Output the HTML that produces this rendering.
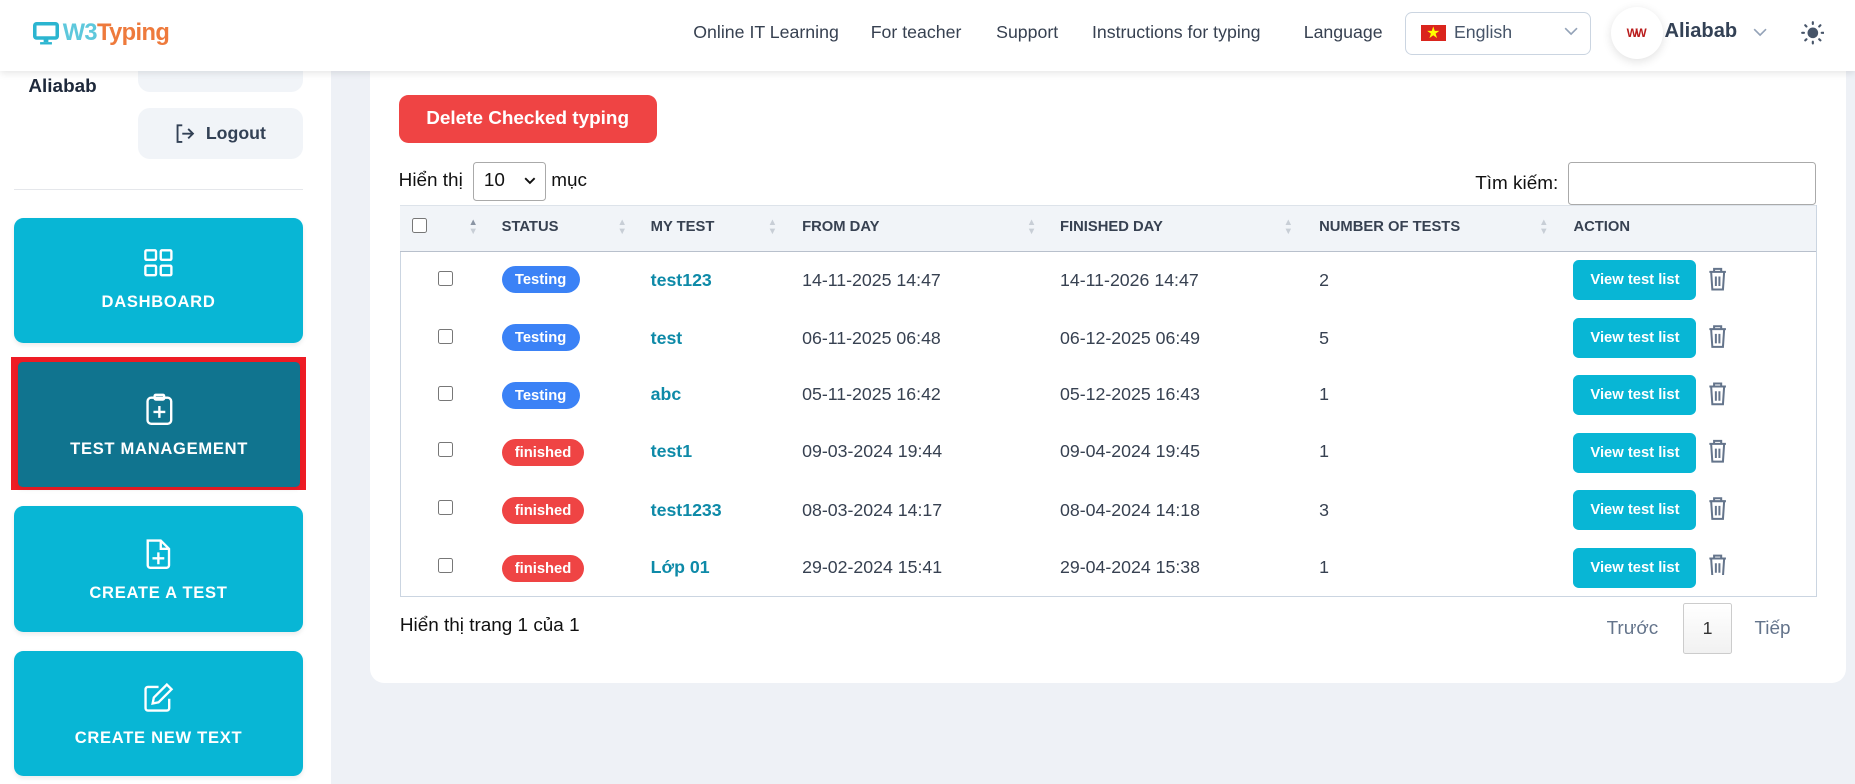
<!DOCTYPE html>
<html><head><meta charset="utf-8"><style>
html,body{margin:0;padding:0;}
body{width:1568px;height:663px;zoom:1.18304;overflow:hidden;background:#eef1f6;font-family:"Liberation Sans","Noto Sans CJK SC",sans-serif;position:relative;color:#334155}
.a{position:absolute}
.hdr{left:0;top:0;width:1568px;height:60px;background:#fff;box-shadow:0 2px 6px rgba(0,0,0,.1);z-index:5}
.nav{font-size:15px;color:#374151;top:19px}
.side{left:0;top:0;width:280px;height:663px;background:#fff}
.nb{left:12px;width:244px;height:106px;background:#08b6d5;border-radius:8px;color:#fff;font-weight:bold;font-size:14px;letter-spacing:.6px;text-align:center;box-shadow:0 2px 4px rgba(0,0,0,.08)}
.nb svg{display:block;margin:26px auto 11px}
.card{left:313px;top:40px;width:1247px;height:537px;background:#fff;border-radius:12px}
.th{top:185px;font-size:12.5px;font-weight:bold;color:#374151}
.cell{font-size:15px;color:#374151}
.cb{width:11px;height:11px;border:1px solid #777;border-radius:2px;background:#fff}
.badge{height:23px;line-height:24px;border-radius:12px;color:#fff;font-weight:bold;font-size:12.5px;text-align:center}
.lnk{color:#0e8aa8;font-weight:bold;font-size:15px}
.vb{width:104px;height:34px;line-height:34px;background:#08b6d5;border-radius:5px;color:#fff;font-weight:bold;font-size:12.5px;text-align:center}
.sort{font-size:8px;color:#c8ced6;line-height:8px}
</style></head><body>
<div class="a side"></div>
<div class="a card"></div>
<!-- header -->
<div class="a hdr">
 <svg class="a" style="left:28px;top:19px" width="22" height="20" viewBox="0 0 22 20"><rect x="1.5" y="1.5" width="19" height="12" rx="1.5" fill="none" stroke="#2bb5d0" stroke-width="3"/><rect x="9" y="14" width="4" height="3" fill="#2bb5d0"/><rect x="6" y="17" width="10" height="2" fill="#2bb5d0"/></svg>
 <div class="a" style="left:53px;top:17px;font-size:20px;font-weight:bold;letter-spacing:-0.5px"><span style="color:#5ec8dc">W3</span><span style="color:#ee7a3c">Typing</span></div>
 <div class="a nav" style="left:586px">Online IT Learning</div>
 <div class="a nav" style="left:736px">For teacher</div>
 <div class="a nav" style="left:842px">Support</div>
 <div class="a nav" style="left:923px">Instructions for typing</div>
 <div class="a nav" style="left:1102px">Language</div>
 <div class="a" style="left:1188px;top:10px;width:155px;height:35px;border:1px solid #cbd5e1;border-radius:6px"></div>
 <div class="a" style="left:1201px;top:21px;width:21px;height:14px;background:#da251d"></div>
 <div class="a" style="left:1206px;top:19px;color:#ff0;font-size:11px">★</div>
 <div class="a nav" style="left:1229px;color:#475569">English</div>
 <svg class="a" style="left:1322px;top:23px" width="12" height="8" viewBox="0 0 12 8"><path d="M1 1l5 5 5-5" fill="none" stroke="#94a3b8" stroke-width="1.4"/></svg>
 <div class="a" style="left:1362px;top:6px;width:44px;height:44px;border-radius:50%;background:#fff;box-shadow:0 2px 8px rgba(0,0,0,.12)"></div>
 <div class="a" style="left:1375px;top:22px;color:#b91c1c;font-size:10px;font-weight:bold;letter-spacing:-2px">WW</div>
 <div class="a" style="left:1407px;top:17px;font-size:17px;font-weight:bold;color:#334155">Aliabab</div>
 <svg class="a" style="left:1482px;top:24px" width="12" height="8" viewBox="0 0 12 8"><path d="M1 1l5 5 5-5" fill="none" stroke="#94a3b8" stroke-width="1.4"/></svg>
 <svg class="a" style="left:1522px;top:18px" width="20" height="20" viewBox="0 0 20 20"><circle cx="10" cy="10" r="4.5" fill="#475569"/><g stroke="#475569" stroke-width="1.8" stroke-linecap="round"><path d="M10 1v1.5M10 17.5V19M1 10h1.5M17.5 10H19M3.6 3.6l1 1M15.4 15.4l1 1M3.6 16.4l1-1M15.4 4.6l1-1"/></g></svg>
</div>
<!-- sidebar -->
<div class="a" style="left:117px;top:40px;width:139px;height:38px;background:#f1f4f8;border-radius:10px"></div>
<div class="a" style="left:24px;top:64px;font-size:16px;font-weight:bold;color:#1e293b">Aliabab</div>
<div class="a" style="left:117px;top:91px;width:139px;height:43px;background:#f1f4f8;border-radius:10px"></div>
<svg class="a" style="left:147px;top:104px" width="18" height="18" viewBox="0 0 18 18" fill="none" stroke="#334155" stroke-width="1.6"><path d="M7 2H3v14h4M7 9h9M12 5l4 4-4 4"/></svg>
<div class="a" style="left:174px;top:104px;font-size:15px;font-weight:bold;color:#334155">Logout</div>
<div class="a" style="left:12px;top:160px;width:244px;height:1px;background:#e5e7eb"></div>
<div class="a nb" style="top:184px"><svg width="26" height="26" viewBox="0 0 26 26" fill="none" stroke="#fff" stroke-width="2"><rect x="2" y="2" width="9" height="8" rx="1"/><rect x="15" y="2" width="9" height="8" rx="1"/><rect x="2" y="15" width="9" height="8" rx="1"/><rect x="15" y="15" width="9" height="8" rx="1"/></svg>DASHBOARD</div>
<div class="a" style="left:9px;top:302px;width:250px;height:112px;background:#ee1c25"></div>
<div class="a nb" style="top:306px;left:15px;width:239px;background:#10748f;border-radius:4px"><svg width="26" height="28" viewBox="0 0 26 28" fill="none" stroke="#fff" stroke-width="2"><rect x="3" y="4" width="20" height="22" rx="3"/><rect x="9" y="1.5" width="8" height="4" rx="1"/><path d="M13 11v10M8 16h10"/></svg>TEST MANAGEMENT</div>
<div class="a nb" style="top:428px"><svg width="26" height="28" viewBox="0 0 26 28" fill="none" stroke="#fff" stroke-width="2"><path d="M4 3h11l7 7v14a2 2 0 0 1-2 2H6a2 2 0 0 1-2-2z"/><path d="M15 3v7h7M13 13v10M8 18h10"/></svg>CREATE A TEST</div>
<div class="a nb" style="top:550px"><svg width="28" height="28" viewBox="0 0 28 28" fill="none" stroke="#fff" stroke-width="2"><path d="M14 5H5a2 2 0 0 0-2 2v16a2 2 0 0 0 2 2h16a2 2 0 0 0 2-2v-8"/><path d="M21 3l4 4-11 11-5 1 1-5z"/></svg>CREATE NEW TEXT</div>
<!-- main -->
<div class="a" style="left:337px;top:80px;width:218px;height:41px;background:#ef4444;border-radius:8px;color:#fff;font-weight:bold;font-size:16px;line-height:41px;text-align:center">Delete Checked typing</div>
<div class="a" style="left:337px;top:144px;font-size:16px;color:#111">Hiển thị</div>
<div class="a" style="left:400px;top:137px;width:60px;height:31px;border:1px solid #aaa;border-radius:3px;background:#fff"></div>
<div class="a" style="left:409px;top:144px;font-size:16px;color:#111">10</div>
<svg class="a" style="left:443px;top:150px" width="10" height="7" viewBox="0 0 10 7"><path d="M1 1l4 4 4-4" fill="none" stroke="#111" stroke-width="1.6"/></svg>
<div class="a" style="left:466px;top:144px;font-size:16px;color:#111">mục</div>
<div class="a" style="left:1247px;top:146px;font-size:16px;color:#111">Tìm kiếm:</div>
<div class="a" style="left:1325px;top:137px;width:208px;height:35px;border:1px solid #aaa;border-radius:3px;background:#fff"></div>
<div class="a" style="left:338px;top:173px;width:1196px;height:331px;border:1px solid #cbd5e1;border-top:none"></div>
<div class="a" style="left:338px;top:173px;width:1197px;height:38px;background:#f1f4f8;border-bottom:1px solid #b8c0cc;border-top:1px solid #dde3ea"></div>
<div class="a cb" style="left:348px;top:184px"></div>
<div class="a sort" style="left:396px;top:184px"><span style="color:#8a94a3">▲</span><br>▼</div>
<div class="a th" style="left:424px">STATUS</div>
<div class="a sort" style="left:522px;top:184px">▲<br>▼</div>
<div class="a th" style="left:550px">MY TEST</div>
<div class="a sort" style="left:649px;top:184px">▲<br>▼</div>
<div class="a th" style="left:678px">FROM DAY</div>
<div class="a sort" style="left:868px;top:184px">▲<br>▼</div>
<div class="a th" style="left:896px">FINISHED DAY</div>
<div class="a sort" style="left:1085px;top:184px">▲<br>▼</div>
<div class="a th" style="left:1115px">NUMBER OF TESTS</div>
<div class="a sort" style="left:1301px;top:184px">▲<br>▼</div>
<div class="a th" style="left:1330px">ACTION</div>

<div class="a cb" style="left:370px;top:229px"></div><div class="a badge" style="left:424px;top:225px;width:66px;background:#3b82f6">Testing</div><div class="a lnk" style="left:550px;top:228px">test123</div><div class="a cell" style="left:678px;top:228px">14-11-2025 14:47</div><div class="a cell" style="left:896px;top:228px">14-11-2026 14:47</div><div class="a cell" style="left:1115px;top:228px">2</div><div class="a vb" style="left:1330px;top:220px">View test list</div>
<div class="a cb" style="left:370px;top:278px"></div><div class="a badge" style="left:424px;top:274px;width:66px;background:#3b82f6">Testing</div><div class="a lnk" style="left:550px;top:277px">test</div><div class="a cell" style="left:678px;top:277px">06-11-2025 06:48</div><div class="a cell" style="left:896px;top:277px">06-12-2025 06:49</div><div class="a cell" style="left:1115px;top:277px">5</div><div class="a vb" style="left:1330px;top:269px">View test list</div>
<div class="a cb" style="left:370px;top:326px"></div><div class="a badge" style="left:424px;top:323px;width:66px;background:#3b82f6">Testing</div><div class="a lnk" style="left:550px;top:325px">abc</div><div class="a cell" style="left:678px;top:325px">05-11-2025 16:42</div><div class="a cell" style="left:896px;top:325px">05-12-2025 16:43</div><div class="a cell" style="left:1115px;top:325px">1</div><div class="a vb" style="left:1330px;top:317px">View test list</div>
<div class="a cb" style="left:370px;top:374px"></div><div class="a badge" style="left:424px;top:371px;width:70px;background:#ef4444">finished</div><div class="a lnk" style="left:550px;top:373px">test1</div><div class="a cell" style="left:678px;top:373px">09-03-2024 19:44</div><div class="a cell" style="left:896px;top:373px">09-04-2024 19:45</div><div class="a cell" style="left:1115px;top:373px">1</div><div class="a vb" style="left:1330px;top:366px">View test list</div>
<div class="a cb" style="left:370px;top:423px"></div><div class="a badge" style="left:424px;top:420px;width:70px;background:#ef4444">finished</div><div class="a lnk" style="left:550px;top:423px">test1233</div><div class="a cell" style="left:678px;top:423px">08-03-2024 14:17</div><div class="a cell" style="left:896px;top:423px">08-04-2024 14:18</div><div class="a cell" style="left:1115px;top:423px">3</div><div class="a vb" style="left:1330px;top:414px">View test list</div>
<div class="a cb" style="left:370px;top:472px"></div><div class="a badge" style="left:424px;top:469px;width:70px;background:#ef4444">finished</div><div class="a lnk" style="left:550px;top:471px">Lớp 01</div><div class="a cell" style="left:678px;top:471px">29-02-2024 15:41</div><div class="a cell" style="left:896px;top:471px">29-04-2024 15:38</div><div class="a cell" style="left:1115px;top:471px">1</div><div class="a vb" style="left:1330px;top:463px">View test list</div>
<svg class="a" style="left:1443px;top:226px" width="18" height="260" viewBox="0 0 18 260" fill="none" stroke="#64748b" stroke-width="1.7">
<g id="t"><path d="M2 4h14M6 4V1.5h6V4M3.5 4l1 15h9l1-15M7.5 8v8M10.5 8v8"/></g>
<use href="#t" y="48.5"/><use href="#t" y="97"/><use href="#t" y="145.5"/><use href="#t" y="194"/><use href="#t" y="242.5"/>
</svg>
<div class="a" style="left:338px;top:520px;font-size:16px;color:#111">Hiển thị trang 1 của 1</div>
<div class="a" style="left:1358px;top:522px;font-size:16px;color:#64748b">Trước</div>
<div class="a" style="left:1423px;top:510px;width:39px;height:41px;border:1px solid #ccc;border-radius:2px;background:linear-gradient(#fff,#f1f1f1);text-align:center;line-height:41px;font-size:15px;color:#333">1</div>
<div class="a" style="left:1483px;top:522px;font-size:16px;color:#64748b">Tiếp</div>
</body></html>
